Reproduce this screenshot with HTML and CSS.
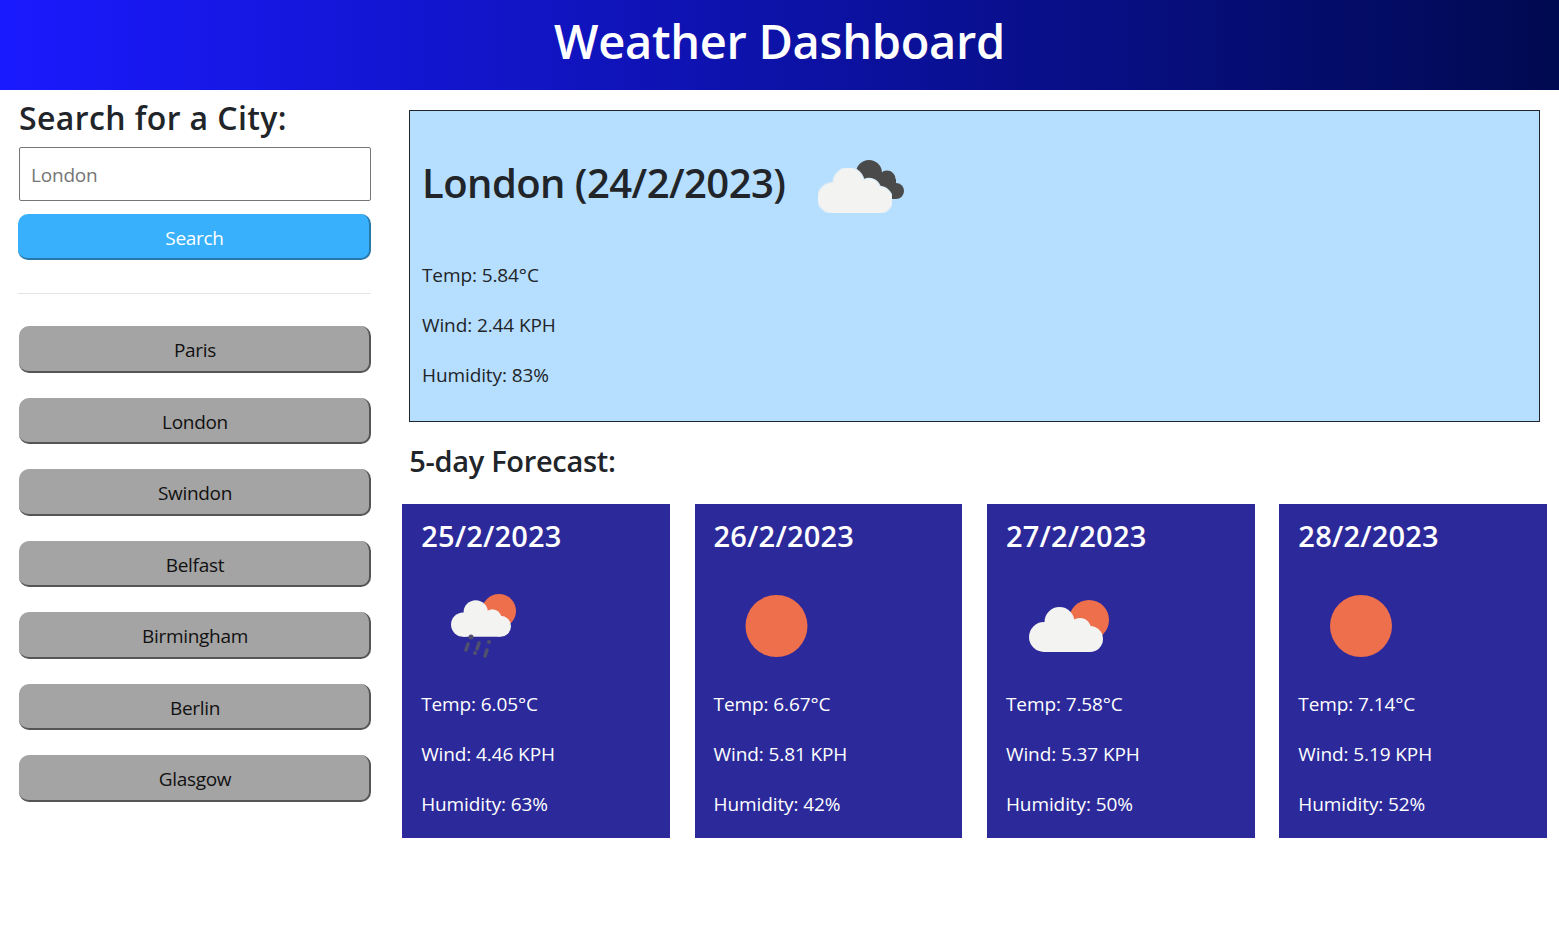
FILE: index.html
```html
<!DOCTYPE html>
<html lang="en">
<head>
  <meta charset="UTF-8" />
  <title>Weather Dashboard</title>
  <meta name="viewport" content="width=device-width, initial-scale=1.0" />
  <link rel="stylesheet" href="styles.css">
</head>
<body>

  <svg class="defs" width="0" height="0">
    <symbol id="white-cloud" viewBox="0 0 74 45">
      <circle cx="15" cy="30" r="15" />
      <circle cx="30.500" cy="15" r="15" />
      <circle cx="51" cy="22" r="11" />
      <circle cx="61" cy="32" r="13" />
      <rect x="15" y="25" width="46" height="20" />
    </symbol>
  </svg>

  <header class="page-header">
    <h1>Weather Dashboard</h1>
  </header>

  <main class="layout">
    <aside class="sidebar">
      <h2 class="search-title">Search for a City:</h2>
      <input class="search-input" type="text" placeholder="London" />
      <button class="search-btn">Search</button>
      <hr class="divider" />
      <div class="history">
        <button class="city-btn">Paris</button>
        <button class="city-btn">London</button>
        <button class="city-btn">Swindon</button>
        <button class="city-btn">Belfast</button>
        <button class="city-btn">Birmingham</button>
        <button class="city-btn">Berlin</button>
        <button class="city-btn">Glasgow</button>
      </div>
    </aside>

    <section class="content">
      <div class="today">
        <div class="today-head">
          <h2>London (24/2/2023)</h2>
          <svg class="today-icon" viewBox="0 0 100 71" width="100" height="71">
            <g class="dark">
              <circle cx="56" cy="26" r="13" />
              <circle cx="74" cy="32" r="8.500" />
              <circle cx="83" cy="44" r="8" />
              <rect x="56" y="32" width="27" height="20" />
            </g>
            <use class="halo" href="#white-cloud" x="5" y="21" width="74" height="45" />
            <use class="cloud" href="#white-cloud" x="5" y="21" width="74" height="45" />
          </svg>
        </div>
        <p>Temp: 5.84°C</p>
        <p>Wind: 2.44 KPH</p>
        <p>Humidity: 83%</p>
      </div>

      <h3 class="forecast-title">5-day Forecast:</h3>

      <div class="forecast">
        <article class="card">
          <h3>25/2/2023</h3>
          <div class="card-icon">
            <svg viewBox="0 0 100 70" width="100" height="70">
              <circle class="sun" cx="78" cy="20" r="17" />
              <use class="cloud" href="#white-cloud" x="30" y="9" width="60" height="37" />
              <g class="rain">
                <circle cx="50" cy="46" r="2.500" />
                <circle cx="68" cy="51" r="2" />
                <circle cx="54" cy="62" r="2" />
                <line x1="47" y1="53" x2="45" y2="59" />
                <line x1="58" y1="52" x2="56" y2="58" />
                <line x1="66" y1="59" x2="64" y2="65" />
              </g>
            </svg>
          </div>
          <p>Temp: 6.05°C</p>
          <p>Wind: 4.46 KPH</p>
          <p>Humidity: 63%</p>
        </article>
        <article class="card">
          <h3>26/2/2023</h3>
          <div class="card-icon">
            <svg viewBox="0 0 100 70" width="100" height="70"><circle class="sun" cx="62.500" cy="35" r="31" /></svg>
          </div>
          <p>Temp: 6.67°C</p>
          <p>Wind: 5.81 KPH</p>
          <p>Humidity: 42%</p>
        </article>
        <article class="card">
          <h3>27/2/2023</h3>
          <div class="card-icon">
            <svg viewBox="0 0 110 70" width="110" height="70">
              <circle class="sun" cx="83" cy="29" r="20" />
              <use class="cloud" href="#white-cloud" x="23" y="15" width="74" height="47" />
            </svg>
          </div>
          <p>Temp: 7.58°C</p>
          <p>Wind: 5.37 KPH</p>
          <p>Humidity: 50%</p>
        </article>
        <article class="card">
          <h3>28/2/2023</h3>
          <div class="card-icon">
            <svg viewBox="0 0 100 70" width="100" height="70"><circle class="sun" cx="63" cy="35" r="31" /></svg>
          </div>
          <p>Temp: 7.14°C</p>
          <p>Wind: 5.19 KPH</p>
          <p>Humidity: 52%</p>
        </article>
      </div>
    </section>
  </main>

</body>
</html>
```
FILE: styles.css
```css
html, body {
  margin: 0;
  padding: 0;
  background: #fff;
  font-family: 'Open Sans', 'Noto Sans', sans-serif;
  color: #212529;
}

.defs {
  position: absolute;
}

.page-header {
  box-sizing: border-box;
  height: 90px;
  padding-bottom: 8px;
  background: linear-gradient(to right, #1a1aff, #000a50);
  display: flex;
  align-items: center;
  justify-content: center;
}

.page-header h1 {
  margin: 0;
  color: #fff;
  font-size: 47px;
  font-weight: 600;
  letter-spacing: -0.3px;
  line-height: 1;
}

.layout {
  display: flex;
  align-items: flex-start;
}

/* left column */
.sidebar {
  width: 353px;
  margin-left: 18px;
  flex-shrink: 0;
  display: flex;
  flex-direction: column;
}

.search-title {
  margin: 8px 0 9px 1px;
  font-size: 32px;
  font-weight: 600;
  line-height: 40px;
  letter-spacing: 0.4px;
}

.search-input {
  box-sizing: border-box;
  width: 352px;
  height: 54px;
  margin-left: 1px;
  padding: 2px 11px 0;
  border: 1px solid #767676;
  border-radius: 2px;
  font-family: inherit;
  font-size: 19px;
  letter-spacing: -0.2px;
  outline: none;
}

.search-input::placeholder {
  color: #757575;
}

.search-btn {
  height: 46px;
  margin-top: 13px;
  padding: 3px 0 0 2px;
  border: solid #2878aa;
  border-width: 0 2px 2px 0;
  border-radius: 10px;
  background: #38b0fb;
  color: #fff;
  font-family: inherit;
  font-size: 19px;
  letter-spacing: -0.3px;
}

.divider {
  width: 100%;
  margin: 33px 0 32px;
  border: none;
  border-top: 1px solid #e4e4e4;
}

.history {
  display: flex;
  flex-direction: column;
  gap: 25px;
  padding-left: 1px;
}

.city-btn {
  height: 46.500px;
  padding: 4px 0 0 2px;
  border: solid #555;
  border-width: 0 2px 2px 0;
  border-radius: 10px;
  background: #a4a4a4;
  color: #111;
  font-family: inherit;
  font-size: 19px;
  letter-spacing: -0.3px;
}

/* right column */
.content {
  width: 1144.850px;
  margin-left: 31.150px;
}

.today {
  box-sizing: border-box;
  width: 1131px;
  height: 312px;
  margin: 20px 0 0 6.850px;
  padding: 0 12px;
  border: 1px solid #212529;
  background: #b6deff;
}

.today-head {
  display: flex;
  align-items: center;
  height: 143px;
  margin-bottom: -4px;
}

.today-head h2 {
  margin: 0 1px 0 0;
  font-size: 40px;
  font-weight: 600;
  letter-spacing: -0.55px;
}

.today-icon {
  margin-left: 27px;
}

.today p, .card p {
  margin: 0;
  font-size: 19px;
  line-height: 50px;
  letter-spacing: -0.1px;
}

.forecast-title {
  margin: 19px 0 23px 7px;
  font-size: 29px;
  font-weight: 600;
  line-height: 40px;
  letter-spacing: -0.3px;
}

.forecast {
  display: flex;
  gap: 24.750px;
}

.card {
  flex: 1;
  height: 334px;
  box-sizing: border-box;
  padding: 12px 19px;
  background: #2c2a9a;
  color: #fff;
}

.card h3 {
  margin: 0;
  font-size: 29px;
  font-weight: 600;
  line-height: 40px;
  letter-spacing: 0.2px;
}

.card-icon {
  height: 70px;
  margin: 35px 0 18px;
}

/* weather icons */
.sun {
  fill: #ee6f4c;
}

.cloud {
  fill: #f3f3f1;
}

.dark {
  fill: #4a4a4a;
}

.halo {
  fill: #dcebf5;
  stroke: #dcebf5;
  stroke-width: 2.500px;
}

.rain {
  fill: #50506e;
  stroke: #50506e;
}

.rain line {
  stroke-width: 3.500px;
  stroke-linecap: round;
}

.rain circle {
  stroke: none;
}
```
